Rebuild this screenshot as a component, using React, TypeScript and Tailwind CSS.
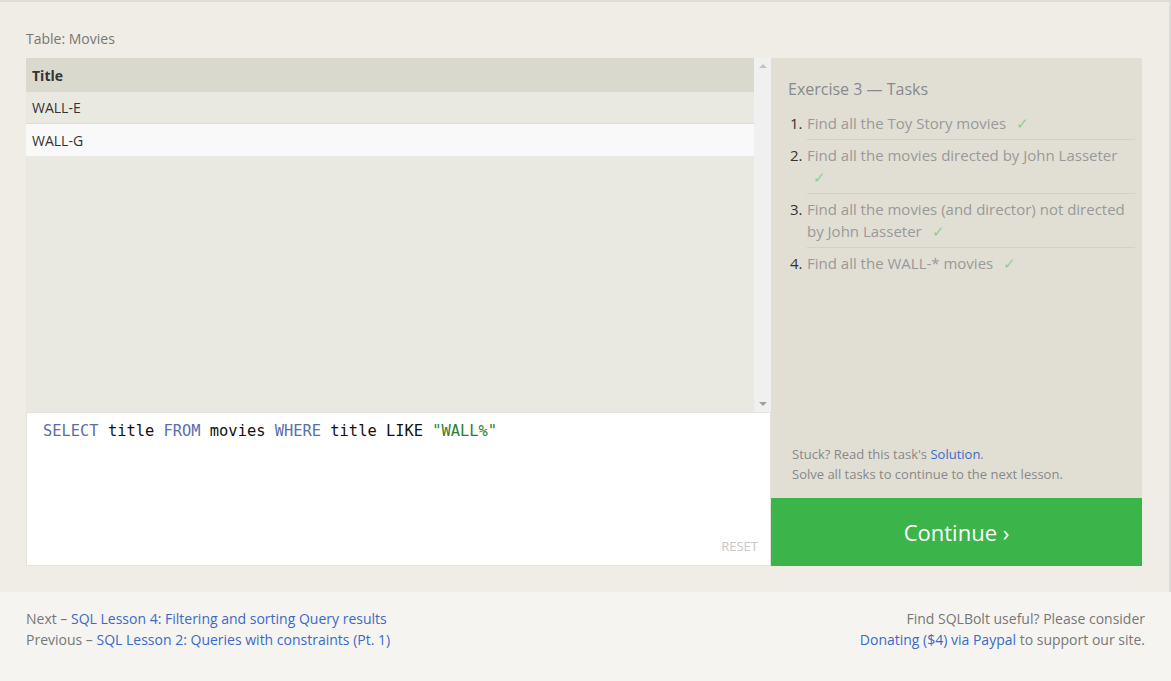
const tasks = [
  { n: 1, text: 'Find all the Toy Story movies' },
  { n: 2, text: 'Find all the movies directed by John Lasseter' },
  { n: 3, text: 'Find all the movies (and director) not directed by John Lasseter' },
  { n: 4, text: 'Find all the WALL-* movies' },
];

const rows = ['WALL-E', 'WALL-G'];

const Check = () => <span className="ml-[6px] text-[#8fcf8f]">✓</span>;

const App = () => {
  return (
    <div className="min-h-screen bg-[#f5f4f0] font-['Open_Sans',sans-serif] text-[14px]">
      {/* Exercise section */}
      <div className="border-t-2 border-r-2 border-[#dedcd6] bg-[#efede6] px-[26px] pt-[26px] pb-[26px]">
        <div className="mb-[9px] text-[14px] text-[#777]">Table: Movies</div>
        <div className="flex h-[508px]">
          {/* Left: table + editor */}
          <div className="flex w-[745px] flex-col">
            <div className="flex h-[354px] bg-[#e9e8e1]">
              <div className="flex-1">
                <div className="flex h-[34px] items-center bg-[#dad9cd] px-[6px] font-bold text-[#333]">Title</div>
                {rows.map((r, i) => (
                  <div
                    key={r}
                    className={`flex h-[32px] items-center px-[6px] text-[#333] ${i === 0 ? 'border-b border-[#dcdbd4] bg-[#e9e8e1]' : 'bg-[#f9f9f9]'}`}
                  >
                    {r}
                  </div>
                ))}
              </div>
              <div className="relative w-[17px] bg-[#f0f0f0]">
                <span className="absolute left-[5px] top-[6px] h-0 w-0 border-x-[4px] border-b-[4px] border-x-transparent border-b-[#c4c4c4]" />
                <span className="absolute bottom-[6px] left-[5px] h-0 w-0 border-x-[4px] border-t-[4px] border-x-transparent border-t-[#a0a0a0]" />
              </div>
            </div>
            <div className="flex flex-1 flex-col border border-[#e3e2dc] bg-white pl-[16px] pr-[12px] pt-[8px] pb-[9px]">
              <div className="flex-1 font-['DejaVu_Sans_Mono',monospace] text-[15.4px] leading-[20px] text-[#111]">
                <span className="text-[#5a6fa8]">SELECT</span> title <span className="text-[#5a6fa8]">FROM</span> movies{' '}
                <span className="text-[#5a6fa8]">WHERE</span> title LIKE <span className="text-[#2e7d32]">"WALL%"</span>
              </div>
              <div className="text-right text-[13px] text-[#c8c8c8]">RESET</div>
            </div>
          </div>

          {/* Right: tasks */}
          <div className="flex w-[371px] flex-col">
            <div className="flex flex-1 flex-col bg-[#e1dfd4] pl-[17px] pr-[7px] pt-[19px] pb-[14px]">
              <div className="mb-[7px] text-[16px] text-[#868a8e]">Exercise 3 — Tasks</div>
              <ol className="flex-1">
                {tasks.map((t, i) => (
                  <li key={t.n} className="flex text-[15px] leading-[22.5px]">
                    <span className="w-[19px] shrink-0 pl-[2px] pt-[4px] text-[#333]">{t.n}.</span>
                    <span
                      className={`flex-1 pt-[4px] pb-[4px] pr-[6px] text-[#999] ${i < tasks.length - 1 ? 'border-b border-[#d3d1c7]' : ''}`}
                    >
                      {t.text} <Check />
                    </span>
                  </li>
                ))}
              </ol>
              <div className="pl-[4px] text-[13px] leading-[20px] text-[#888]">
                <div>
                  Stuck? Read this task's <span className="text-[#3a6ac8]">Solution</span>.
                </div>
                <div>Solve all tasks to continue to the next lesson.</div>
              </div>
            </div>
            <div className="flex h-[68px] items-center justify-center bg-[#3bb44a] text-[22px] text-white">
              Continue ›
            </div>
          </div>
        </div>
      </div>

      {/* Footer */}
      <div className="flex justify-between px-[26px] pt-[16px] text-[14px] leading-[21px] text-[#777]">
        <div>
          <div>
            Next – <span className="text-[#3a6ac8]">SQL Lesson 4: Filtering and sorting Query results</span>
          </div>
          <div>
            Previous – <span className="text-[#3a6ac8]">SQL Lesson 2: Queries with constraints (Pt. 1)</span>
          </div>
        </div>
        <div className="text-right">
          <div>Find SQLBolt useful? Please consider</div>
          <div>
            <span className="text-[#3a6ac8]">Donating ($4) via Paypal</span> to support our site.
          </div>
        </div>
      </div>
    </div>
  );
};

export default App;
